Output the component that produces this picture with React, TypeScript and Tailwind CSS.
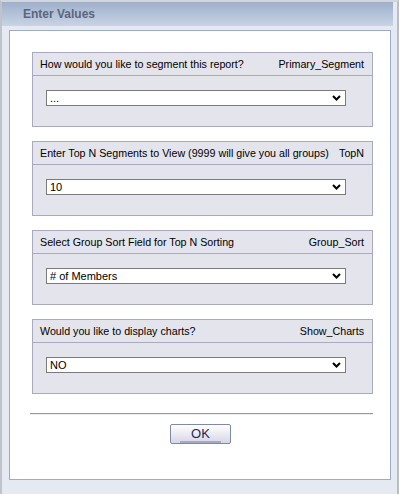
import React from 'react';

const sections = [
  { question: 'How would you like to segment this report?', param: 'Primary_Segment', value: '...' },
  { question: 'Enter Top N Segments to View (9999 will give you all groups)', param: 'TopN', value: '10' },
  { question: 'Select Group Sort Field for Top N Sorting', param: 'Group_Sort', value: '# of Members' },
  { question: 'Would you like to display charts?', param: 'Show_Charts', value: 'NO' },
];

const Chevron = () => (
  <svg width="9" height="6" viewBox="0 0 9 6" className="mr-[4px]">
    <path d="M1 1 L4.5 4.5 L8 1" fill="none" stroke="#000" strokeWidth="2" />
  </svg>
);

const App: React.FC = () => {
  return (
    <div
      className="w-[399px] h-[494px] flex flex-col bg-[#e4e9f2] border-t-2 border-t-[#d2d7df] border-l-2 border-l-[#bfc3ca] border-r-2 border-r-[#b9bdc4]"
      style={{ fontFamily: '"Liberation Sans", Arial, sans-serif' }}
    >
      {/* Title bar */}
      <div className="h-[24px] flex items-center pl-[21px] bg-gradient-to-b from-[#9db0ca] to-[#c9d4e5] border-r-4 border-r-[#e4e9f2]">
        <span className="text-[12px] font-bold text-[#5b667c]">Enter Values</span>
      </div>

      <div className="flex-1 pt-[4px] pl-[7px] pr-[6px] pb-[14px] flex">
        <div className="flex-1 bg-white border border-[#9eabc8] flex flex-col pt-[21px]">
          {sections.map((s, i) => (
            <div
              key={s.param}
              className={`ml-[22px] w-[341px] border border-[#a9a9c0] bg-[#e4e4ec] ${i > 0 ? 'mt-[14px]' : ''}`}
            >
              <div className="h-[23px] flex items-center justify-between pl-[7px] pr-[8px] border-b border-[#a9a9c0] text-[10.7px] text-black">
                <span>{s.question}</span>
                <span>{s.param}</span>
              </div>
              <div className="pt-[14px] pb-[20px] pl-[13px]">
                <div className="w-[300px] h-[16px] bg-white border border-[#7b7b7b] flex items-center justify-between pl-[3px] text-[11px] text-black">
                  <span>{s.value}</span>
                  <Chevron />
                </div>
              </div>
            </div>
          ))}

          <div className="ml-[20px] w-[343px] mt-[19px] border-t border-[#9a9a9a] border-b border-b-[#ececec] h-[2px]" />

          <div className="flex justify-center mt-[6px] pl-[1px]">
            <div className="relative">
              <button className="w-[61px] h-[20px] rounded-[2px] border border-[#8088a8] bg-gradient-to-b from-white to-[#d6d6e6] text-[13px] text-[#1b2a55] leading-none">
                OK
              </button>
              <div className="absolute left-[10px] right-[10px] top-[20px] h-[2px] bg-[#a8a8c4]" />
            </div>
          </div>
        </div>
      </div>
    </div>
  );
};

export default App;
